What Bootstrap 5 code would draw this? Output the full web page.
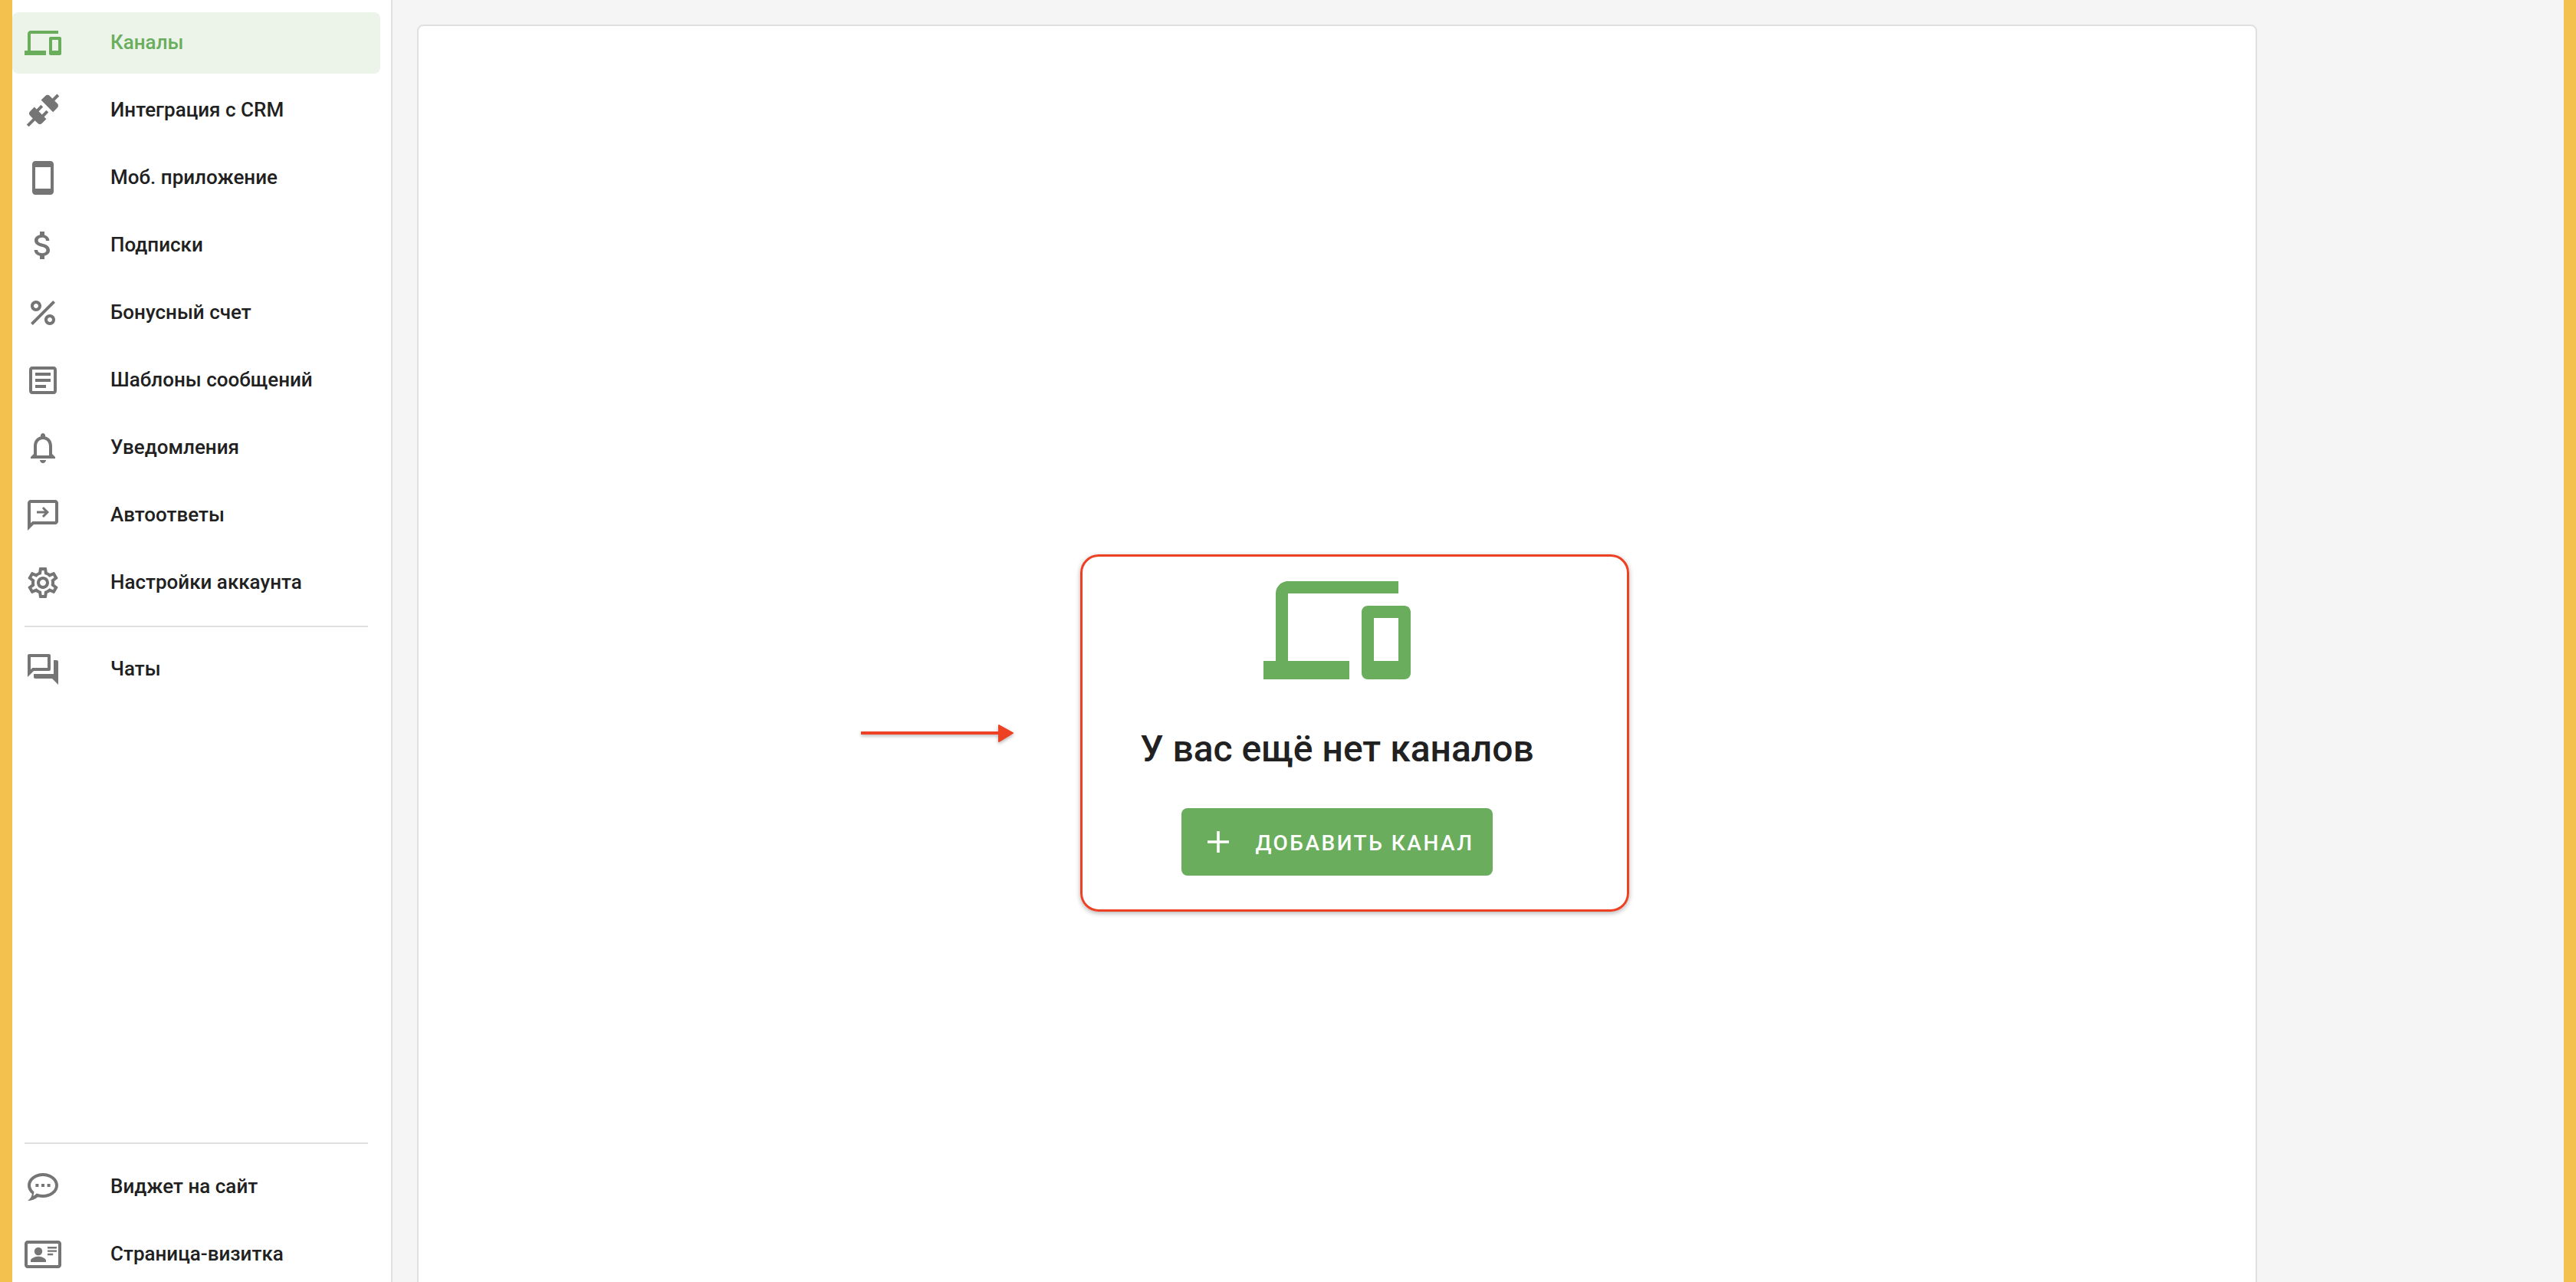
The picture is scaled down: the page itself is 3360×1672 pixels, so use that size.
<!DOCTYPE html>
<html lang="ru">
<head>
    <meta charset="UTF-8">
    <meta name="viewport" content="width=device-width, initial-scale=1.0">
    <title>Каналы</title>

    <link rel="stylesheet" href="https://cdn.jsdelivr.net/npm/bootstrap@5.3.0/dist/css/bootstrap.min.css">

    <style>
        html, body {
            height: 100%;
            overflow: hidden;
        }

        body {
            background-color: #f2c14e;
            color: #212121;
            font-family: "Roboto", "Liberation Sans", sans-serif;
            padding: 0 16px;
            position: relative;
        }

        .app-shell {
            height: 1672px;
            overflow: hidden;
            background-color: #f5f5f5;
        }

        .side-menu {
            width: 496px;
            height: 1684px;
            background-color: #fff;
            border-right: 2px solid #e0e0e0;
            padding-top: 16px;
            flex-shrink: 0;
        }

        .side-link {
            width: 480px;
            height: 80px;
            margin-bottom: 8px;
            padding: 0 0 0 16px;
            border-radius: 8px;
            color: #212121;
            font-size: 26px;
            font-weight: 480;
            line-height: 36px;
        }

        .side-link span {
            margin-bottom: 3px;
        }

        .side-link:hover {
            color: #212121;
        }

        .side-link svg {
            width: 48px;
            height: 48px;
            margin-right: 64px;
            fill: #757575;
            flex-shrink: 0;
        }

        .side-link.is-current {
            background-color: #ecf4ea;
            color: #69ad5d;
        }

        .side-link.is-current svg {
            fill: #69ad5d;
        }

        .side-line {
            width: 448px;
            height: 2px;
            margin: 8px 0 15px 16px;
            background-color: #e0e0e0;
            border: 0;
            opacity: 1;
        }

        .side-bottom .side-line {
            margin: 0 0 16px 16px;
        }

        .content-area {
            padding: 32px 32px 0;
            flex-shrink: 0;
        }

        .channels-card {
            width: 2400px;
            height: 1804px;
            border: 2px solid #e0e0e0;
            border-radius: 8px;
            background-color: #fff;
        }

        .empty-icon {
            width: 192px;
            height: 192px;
            fill: #69ad5d;
            display: block;
        }

        .empty-title {
            font-size: 48px;
            font-weight: 490;
            line-height: 64px;
            color: #212121;
            margin: 27px 0 45px;
        }

        .add-btn {
            height: 88px;
            padding: 0 24px;
            border: 0;
            border-radius: 8px;
            background-color: #69ad5d;
            color: #fff;
            font-size: 28px;
            font-weight: 480;
            letter-spacing: 2.5px;
            text-transform: uppercase;
        }

        .add-btn span {
            margin-top: 3px;
        }

        .add-btn:hover {
            background-color: #69ad5d;
            color: #fff;
        }

        .add-btn svg {
            width: 48px;
            height: 48px;
            margin-right: 24px;
            fill: #fff;
        }

        /* красная рамка и стрелка поверх скриншота */
        .note-frame {
            position: absolute;
            left: 1409px;
            top: 723px;
            width: 716px;
            height: 466px;
            border: 3px solid #ee4023;
            border-radius: 24px;
            box-shadow: 0 2px 6px rgba(0, 0, 0, .3);
        }

        .note-arrow {
            position: absolute;
            left: 1120px;
            top: 940px;
            width: 206px;
            height: 34px;
            filter: drop-shadow(0 2px 2px rgba(0, 0, 0, .3));
        }
    </style>
</head>
<body>
    <div class="app-shell d-flex">
        <aside class="side-menu d-flex flex-column">
            <nav class="nav flex-column">
                <a class="nav-link side-link is-current d-flex align-items-center" href="#">
                    <svg viewBox="0 0 24 24"><path d="M4 6h18V4H4c-1.1 0-2 .9-2 2v11H0v3h14v-3H4V6zm19 2h-6c-.55 0-1 .45-1 1v10c0 .55.45 1 1 1h6c.55 0 1-.45 1-1V9c0-.55-.45-1-1-1zm-1 9h-4v-7h4v7z"/></svg>
                    <span>Каналы</span>
                </a>
                <a class="nav-link side-link d-flex align-items-center" href="#">
                    <svg viewBox="0 0 24 24"><path d="M21.4 7.5c.8.8.8 2.1 0 2.8l-2.8 2.8-7.8-7.8 2.8-2.8c.8-.8 2.1-.8 2.8 0l1.8 1.8 3-3 1.4 1.4-3 3 1.8 1.8zm-5.8 5.8-1.4-1.4-2.8 2.8-2.1-2.1 2.8-2.8-1.4-1.4-2.8 2.8-1.5-1.4-2.8 2.8c-.8.8-.8 2.1 0 2.8l1.8 1.8-4 4 1.4 1.4 4-4 1.8 1.8c.8.8 2.1.8 2.8 0l2.8-2.8-1.4-1.4 2.8-2.9z"/></svg>
                    <span>Интеграция с CRM</span>
                </a>
                <a class="nav-link side-link d-flex align-items-center" href="#">
                    <svg viewBox="0 0 24 24"><path d="M17 1.01 7 1c-1.1 0-1.99.9-1.99 2v18c0 1.1.89 2 1.99 2h10c1.1 0 2-.9 2-2V3c0-1.1-.9-1.99-2-1.99zM17 19H7V5h10v14z"/></svg>
                    <span>Моб. приложение</span>
                </a>
                <a class="nav-link side-link d-flex align-items-center" href="#">
                    <svg viewBox="0 0 24 24"><path d="M11.8 10.9c-2.27-.59-3-1.2-3-2.15 0-1.09 1.01-1.85 2.7-1.85 1.78 0 2.44.85 2.5 2.1h2.21c-.07-1.72-1.12-3.3-3.21-3.81V3h-3v2.16c-1.94.42-3.5 1.68-3.5 3.61 0 2.31 1.91 3.46 4.7 4.13 2.5.6 3 1.48 3 2.41 0 .69-.49 1.79-2.7 1.79-2.06 0-2.87-.92-2.98-2.1h-2.2c.12 2.19 1.76 3.42 3.68 3.83V21h3v-2.15c1.95-.37 3.5-1.5 3.5-3.55 0-2.84-2.43-3.81-4.7-4.4z"/></svg>
                    <span>Подписки</span>
                </a>
                <a class="nav-link side-link d-flex align-items-center" href="#">
                    <svg viewBox="0 0 24 24"><path d="M7.5 4C5.57 4 4 5.57 4 7.5S5.57 11 7.5 11 11 9.43 11 7.5 9.43 4 7.5 4zm0 5C6.67 9 6 8.33 6 7.5S6.67 6 7.5 6 9 6.67 9 7.5 8.33 9 7.5 9zm9 4c-1.93 0-3.5 1.57-3.5 3.5s1.57 3.5 3.5 3.5 3.5-1.57 3.5-3.5-1.57-3.5-3.5-3.5zm0 5c-.83 0-1.5-.67-1.5-1.5s.67-1.5 1.5-1.5 1.5.67 1.5 1.5-.67 1.5-1.5 1.5zM5.41 20 4 18.59 18.59 4 20 5.41 5.41 20z"/></svg>
                    <span>Бонусный счет</span>
                </a>
                <a class="nav-link side-link d-flex align-items-center" href="#">
                    <svg viewBox="0 0 24 24"><path d="M19 5v14H5V5h14m0-2H5c-1.1 0-2 .9-2 2v14c0 1.1.9 2 2 2h14c1.1 0 2-.9 2-2V5c0-1.1-.9-2-2-2zM14 17H7v-2h7v2zm3-4H7v-2h10v2zm0-4H7V7h10v2z"/></svg>
                    <span>Шаблоны сообщений</span>
                </a>
                <a class="nav-link side-link d-flex align-items-center" href="#">
                    <svg viewBox="0 0 24 24"><path d="M12 22c1.1 0 2-.9 2-2h-4c0 1.1.9 2 2 2zm6-6v-5c0-3.07-1.63-5.64-4.5-6.32V4c0-.83-.67-1.5-1.5-1.5s-1.5.67-1.5 1.5v.68C7.64 5.36 6 7.92 6 11v5l-2 2v1h16v-1l-2-2zm-2 1H8v-6c0-2.48 1.51-4.5 4-4.5s4 2.02 4 4.5v6z"/></svg>
                    <span>Уведомления</span>
                </a>
                <a class="nav-link side-link d-flex align-items-center" href="#">
                    <svg viewBox="0 0 24 24"><path d="M20 2H4c-1.1 0-2 .9-2 2v18l4-4h14c1.1 0 2-.9 2-2V4c0-1.1-.9-2-2-2zm0 14H5.17L4 17.17V4h16v12z"/><path d="m12.5 6.5-1.06 1.06 1.69 1.69H8v1.5h5.13l-1.69 1.69 1.06 1.06L16 10z"/></svg>
                    <span>Автоответы</span>
                </a>
                <a class="nav-link side-link d-flex align-items-center" href="#">
                    <svg viewBox="0 0 24 24"><path d="M19.43 12.98c.04-.32.07-.64.07-.98 0-.34-.03-.66-.07-.98l2.11-1.65c.19-.15.24-.42.12-.64l-2-3.46c-.09-.16-.26-.25-.44-.25-.06 0-.12.01-.17.03l-2.49 1c-.52-.4-1.08-.73-1.69-.98l-.38-2.65C14.46 2.18 14.25 2 14 2h-4c-.25 0-.46.18-.49.42l-.38 2.65c-.61.25-1.17.59-1.69.98l-2.49-1c-.06-.02-.12-.03-.18-.03-.17 0-.34.09-.43.25l-2 3.46c-.13.22-.07.49.12.64l2.11 1.65c-.04.32-.07.65-.07.98 0 .33.03.66.07.98l-2.11 1.65c-.19.15-.24.42-.12.64l2 3.46c.09.16.26.25.44.25.06 0 .12-.01.17-.03l2.49-1c.52.4 1.08.73 1.69.98l.38 2.65c.03.24.24.42.49.42h4c.25 0 .46-.18.49-.42l.38-2.65c.61-.25 1.17-.59 1.69-.98l2.49 1c.06.02.12.03.18.03.17 0 .34-.09.43-.25l2-3.46c.12-.22.07-.49-.12-.64l-2.11-1.65zm-1.98-1.71c.04.31.05.52.05.73 0 .21-.02.43-.05.73l-.14 1.13.89.7 1.08.84-.7 1.21-1.27-.51-1.04-.42-.9.68c-.43.32-.84.56-1.25.73l-1.06.43-.16 1.13-.2 1.35h-1.4l-.19-1.35-.16-1.13-1.06-.43c-.43-.18-.83-.41-1.23-.71l-.91-.7-1.06.43-1.27.51-.7-1.21 1.08-.84.89-.7-.14-1.13c-.03-.31-.05-.54-.05-.74s.02-.43.05-.73l.14-1.13-.89-.7-1.08-.84.7-1.21 1.27.51 1.04.42.9-.68c.43-.32.84-.56 1.25-.73l1.06-.43.16-1.13.2-1.35h1.39l.19 1.35.16 1.13 1.06.43c.43.18.83.41 1.23.71l.91.7 1.06-.43 1.27-.51.7 1.21-1.07.85-.89.7.14 1.13zM12 8c-2.21 0-4 1.79-4 4s1.79 4 4 4 4-1.79 4-4-1.79-4-4-4zm0 6c-1.1 0-2-.9-2-2s.9-2 2-2 2 .9 2 2-.9 2-2 2z"/></svg>
                    <span>Настройки аккаунта</span>
                </a>
                <hr class="side-line">
                <a class="nav-link side-link d-flex align-items-center" href="#">
                    <svg viewBox="0 0 24 24"><path d="M15 4v7H5.17L4 12.17V4h11m1-2H3c-.55 0-1 .45-1 1v14l4-4h10c.55 0 1-.45 1-1V3c0-.55-.45-1-1-1zm5 4h-2v9H6v2c0 .55.45 1 1 1h11l4 4V7c0-.55-.45-1-1-1z"/></svg>
                    <span>Чаты</span>
                </a>
            </nav>
            <nav class="nav flex-column side-bottom mt-auto">
                <hr class="side-line">
                <a class="nav-link side-link d-flex align-items-center" href="#">
                    <svg viewBox="0 0 24 24"><path d="M12 3C6.5 3 2 6.6 2 11c0 2.2 1.1 4.1 2.9 5.6-.2 1.5-1 3-2.9 4.4 2.5 0 5-.9 6.6-2.4 1.1.3 2.2.4 3.4.4 5.5 0 10-3.6 10-8s-4.5-8-10-8zm0 14c-1.1 0-2.2-.2-3.2-.5l-.9-.2-.7.6c-.5.4-1 .8-1.6 1 .3-.6.4-1.2.5-1.9l.1-.9-.7-.6C4.6 13.4 4 12.2 4 11c0-3.3 3.6-6 8-6s8 2.7 8 6-3.6 6-8 6z"/><path d="M7.2 10h2v2h-2zM11 10h2v2h-2zM14.8 10h2v2h-2z"/></svg>
                    <span>Виджет на сайт</span>
                </a>
                <a class="nav-link side-link d-flex align-items-center" href="#">
                    <svg viewBox="0 0 24 24"><path d="M22 3H2C.9 3 0 3.9 0 5v14c0 1.1.9 2 2 2h20c1.1 0 2-.9 2-2V5c0-1.1-.9-2-2-2zm0 16H2V5h20v14z"/><circle cx="9" cy="10" r="2.6"/><path d="M4 17v-1c0-1.6 3.2-2.6 5-2.6s5 1 5 2.6v1H4zM15 7h6v1.2h-6zM15 9.2h6v1.2h-6zM15 11.4h3.6v1.2H15z"/></svg>
                    <span>Страница-визитка</span>
                </a>
            </nav>
        </aside>

        <main class="content-area">
            <div class="card channels-card d-flex flex-column align-items-center justify-content-center">
                <svg class="empty-icon" viewBox="0 0 24 24"><path d="M4 6h18V4H4c-1.1 0-2 .9-2 2v11H0v3h14v-3H4V6zm19 2h-6c-.55 0-1 .45-1 1v10c0 .55.45 1 1 1h6c.55 0 1-.45 1-1V9c0-.55-.45-1-1-1zm-1 9h-4v-7h4v7z"/></svg>
                <h5 class="empty-title">У вас ещё нет каналов</h5>
                <button type="button" class="btn add-btn d-inline-flex align-items-center">
                    <svg viewBox="0 0 24 24"><path d="M19 12.9h-6.1V19h-1.8v-6.1H5v-1.8h6.1V5h1.8v6.1H19z"/></svg>
                    <span>Добавить канал</span>
                </button>
            </div>
        </main>
    </div>

    <div class="note-frame"></div>
    <svg class="note-arrow" viewBox="0 0 206 34">
        <rect x="3" y="14" width="186" height="4" fill="#ee4023"/>
        <path d="M183 6 201 16 183 27z" fill="#ee4023" stroke="#ee4023" stroke-width="2" stroke-linejoin="round"/>
    </svg>
</body>
</html>
